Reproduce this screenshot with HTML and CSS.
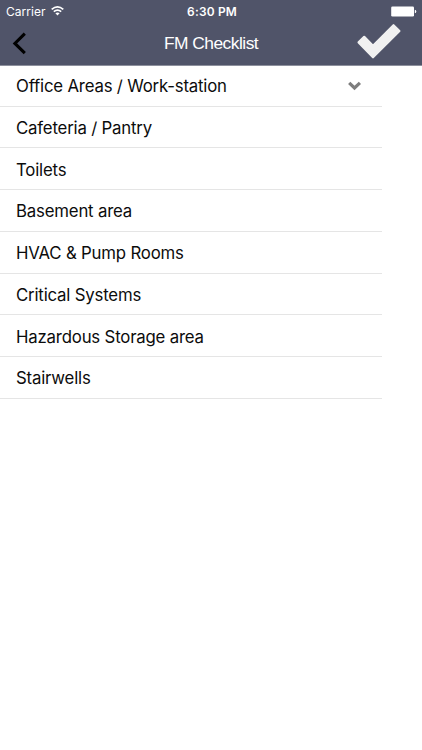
FILE: index.html
```html
<!DOCTYPE html>
<html lang="en">
<head>
<meta charset="utf-8">
<title>FM Checklist</title>
<link rel="stylesheet" href="styles.css">
</head>
<body>
<header class="header">
  <div class="status">
    <div class="network"><span class="carrier">Carrier</span>
      <svg class="wifi" width="13" height="10" viewBox="0 0 13 10"><g fill="none" stroke="#fff" stroke-width="1.7"><path d="M.7 3.4Q6.5-1.5 12.3 3.4M2.8 5.7Q6.5 2.6 10.2 5.7"/></g><path d="M4.4 7.2Q6.5 5.6 8.6 7.2L6.5 9.5Z" fill="#fff"/></svg>
    </div>
    <time class="time">6:30 PM</time>
    <svg class="battery" width="26" height="11" viewBox="0 0 26 11"><rect x=".2" y=".5" width="22.8" height="10" rx="1.3" fill="#fff"/><path d="M23.8 3.8Q25.3 4 25.3 5.5T23.8 7.2Z" fill="#fff"/></svg>
  </div>
  <nav class="nav">
    <svg class="back" width="16" height="24" viewBox="0 0 16 24"><path d="M13.8 1.6 3.9 11.4 13.8 21.2" fill="none" stroke="#000" stroke-width="3.1"/></svg>
    <h1 class="title">FM Checklist</h1>
    <svg class="done" width="46" height="36" viewBox="0 0 46 36"><path d="M1.8 18.6 7.4 13.1Q8.2 12.4 9 13.1L17 21.2 36.7 1.4Q37.5.7 38.3 1.4L44.2 7.2Q44.9 8 44.2 8.8L17.8 35.1Q17 35.8 16.2 35.1L1.8 20.3Q1 19.4 1.8 18.6Z" fill="#f1f1f1"/></svg>
  </nav>
</header>
<ul class="list">
  <li class="row"><span class="label">Office Areas / Work-station</span>
    <svg class="chevron" width="14" height="10" viewBox="0 0 14 10"><path d="M1.2 1.8 6.5 7 11.9 1.8" fill="none" stroke="#7d7d7d" stroke-width="3.2"/></svg></li>
  <li class="row"><span class="label">Cafeteria / Pantry</span></li>
  <li class="row"><span class="label">Toilets</span></li>
  <li class="row"><span class="label">Basement area</span></li>
  <li class="row"><span class="label">HVAC &amp; Pump Rooms</span></li>
  <li class="row"><span class="label">Critical Systems</span></li>
  <li class="row"><span class="label">Hazardous Storage area</span></li>
  <li class="row"><span class="label">Stairwells</span></li>
</ul>
</body>
</html>
```
FILE: styles.css
```css
* { box-sizing: border-box; }
body { margin: 0; background: #fff; color: #0c0c0c; font-family: Inter, "Liberation Sans", sans-serif; }
svg { display: block; }
.header { height: 66px; background: #505469; color: #fff; border-bottom: 1px solid #8d909d; }
.status { height: 22px; display: grid; grid-template-columns: 1fr auto 1fr; align-items: center; padding: 0 5px 0 6px; font-size: 12px; }
.network { display: flex; align-items: center; gap: 5px; }
.carrier { letter-spacing: .05px; }
.time { margin-left: 1px; font-weight: 600; font-size: 11.9px; letter-spacing: .2px; }
.battery { justify-self: end; }
.nav { height: 43px; display: grid; grid-template-columns: 1fr auto 1fr; align-items: center; padding: 0 20px 0 11px; }
.title { margin: 0; transform: translateX(4.5px); font: 400 17.4px "Liberation Sans", sans-serif; letter-spacing: -.52px; }
.done { justify-self: end; margin-top: -5px; }
.list { width: 382px; margin: 0; padding: 0; list-style: none; }
.row { height: 41.75px; display: flex; align-items: center; justify-content: space-between; padding: 1.6px 20px 0 16px; border-bottom: 1px solid #e5e5e5; }
.row:first-child { height: 40.6px; padding-top: 0; }
.label { font-size: 16.8px; line-height: 24px; letter-spacing: -.19px; }
```
